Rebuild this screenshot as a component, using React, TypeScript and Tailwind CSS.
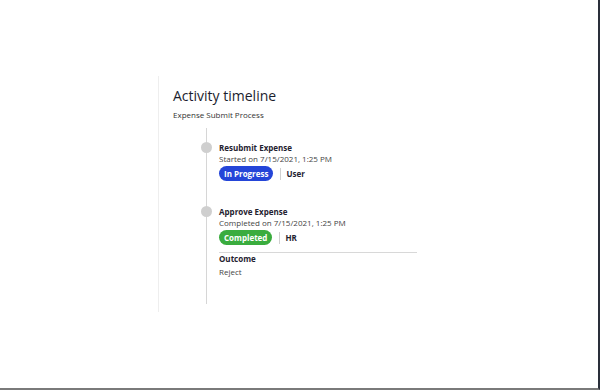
const steps = [
  {
    title: 'Resubmit Expense',
    meta: 'Started on 7/15/2021, 1:25 PM',
    status: 'In Progress',
    badge: 'bg-[#2445d8]',
    who: 'User',
  },
  {
    title: 'Approve Expense',
    meta: 'Completed on 7/15/2021, 1:25 PM',
    status: 'Completed',
    badge: 'bg-[#3aac3e]',
    who: 'HR',
    outcome: 'Reject',
  },
];

export default function App() {
  return (
    <div className="w-[600px] h-[390px] bg-white border-r-2 border-r-[#2a2f3a] border-b-2 border-b-[#7a7a7a] font-['Open_Sans',sans-serif] overflow-hidden">
      <div className="ml-[158px] mt-[76px] w-[300px] h-[236px] border-l border-[#eeeeee] pl-[14px] pt-[10px]">
        <h1 className="text-[14px] leading-[20px] font-medium text-[#1b1d2e]">Activity timeline</h1>
        <p className="mt-[3px] text-[8px] leading-[11px] text-[#333]">Expense Submit Process</p>

        <div className="ml-[33px] mt-[8px] h-[176px] border-l border-[#d6d6d6] pl-[12px] pt-[14px]">
          {steps.map((s) => (
            <div key={s.title} className="relative mb-[25px]">
              <span className="absolute left-[-18px] top-0 w-[11px] h-[11px] rounded-full bg-[#cfcfcf]" />
              <div className="text-[8px] leading-[11px] font-bold text-[#1f2230]">{s.title}</div>
              <div className="text-[8px] leading-[11px] text-[#444]">{s.meta}</div>
              <div className="mt-[2px] flex items-center">
                <span className={`${s.badge} text-white text-[8px] font-bold leading-[15px] h-[15px] px-[5px] rounded-full`}>
                  {s.status}
                </span>
                <span className="ml-[7px] h-[12px] border-l border-[#d0d0d0]" />
                <span className="ml-[5px] text-[8px] font-bold text-[#1f2230]">{s.who}</span>
              </div>
              {s.outcome && (
                <div className="mt-[7px] w-[198px] border-t border-[#d8d8d8]">
                  <div className="text-[8px] leading-[11px] font-bold text-[#1f2230]">Outcome</div>
                  <div className="mt-[2px] text-[8px] leading-[11px] text-[#444]">{s.outcome}</div>
                </div>
              )}
            </div>
          ))}
        </div>
      </div>
    </div>
  );
}
